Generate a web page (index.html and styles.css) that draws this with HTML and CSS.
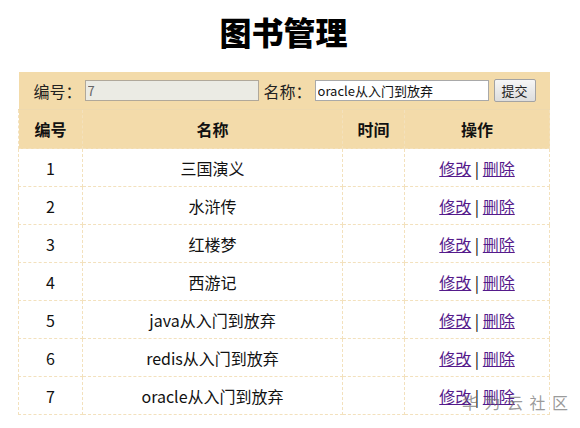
FILE: index.html
```html
<!DOCTYPE html>
<html lang="zh-CN">
<head>
<meta charset="utf-8">
<link rel="stylesheet" href="styles.css">
</head>
<body>
<div class="page">
  <h1 class="title">图书管理</h1>
  <table class="books">
    <colgroup>
      <col class="c-id">
      <col class="c-name">
      <col class="c-time">
      <col class="c-op">
    </colgroup>
    <tr class="form-row">
      <td colspan="4">
        <form class="book-form">
          <label class="lbl">编号：</label>
          <input class="field field-id" type="text" value="7" readonly>
          <label class="lbl lbl-name">名称：</label>
          <input class="field field-name" type="text" value="oracle从入门到放弃">
          <button class="submit" type="button">提交</button>
        </form>
      </td>
    </tr>
    <tr class="head-row">
      <th>编号</th>
      <th>名称</th>
      <th>时间</th>
      <th>操作</th>
    </tr>
    <tr><td>1</td><td>三国演义</td><td></td><td><a href="#">修改</a> | <a href="#">删除</a></td></tr>
    <tr><td>2</td><td>水浒传</td><td></td><td><a href="#">修改</a> | <a href="#">删除</a></td></tr>
    <tr><td>3</td><td>红楼梦</td><td></td><td><a href="#">修改</a> | <a href="#">删除</a></td></tr>
    <tr><td>4</td><td>西游记</td><td></td><td><a href="#">修改</a> | <a href="#">删除</a></td></tr>
    <tr><td>5</td><td>java从入门到放弃</td><td></td><td><a href="#">修改</a> | <a href="#">删除</a></td></tr>
    <tr><td>6</td><td>redis从入门到放弃</td><td></td><td><a href="#">修改</a> | <a href="#">删除</a></td></tr>
    <tr><td>7</td><td>oracle从入门到放弃</td><td></td><td><a href="#">修改</a> | <a href="#">删除</a></td></tr>
  </table>
</div>
<div class="watermark">华为云社区</div>
</body>
</html>
```

FILE: styles.css
```css
html, body {
  margin: 0;
  padding: 0;
  background: #ffffff;
}
body {
  font-family: "Noto Sans CJK SC", "Noto Sans", sans-serif;
  color: #111;
  font-size: 16px;
}
.page {
  width: 531px;
  margin-left: 18px;
}
.title {
  margin: 11px 0 21px;
  font-size: 32px;
  line-height: 40px;
  font-weight: 900;
  text-align: center;
  color: #000;
}
.books {
  width: 531px;
  border-collapse: collapse;
  table-layout: fixed;
}
.c-id { width: 64px; }
.c-name { width: 260px; }
.c-time { width: 62px; }
.c-op { width: 145px; }
.books td, .books th {
  border: 1px dashed #f3e1bd;
  text-align: center;
  height: 37px;
  padding: 0;
  font-size: 16px;
  line-height: 20px;
  white-space: nowrap;
}
.form-row td {
  background: #f3dbaa;
  border: none;
  border-bottom: 1px solid #eed9ae;
  text-align: left;
  height: 37px;
}
.book-form {
  display: flex;
  align-items: center;
  padding-left: 15px;
  margin: 0;
  color: #222;
}
.lbl {
  font-size: 16px;
  margin-right: 3px;
}
.lbl-name {
  margin-left: 5px;
}
.field {
  box-sizing: border-box;
  height: 21px;
  border: 1px solid #a9a9a9;
  padding: 0 2px;
  font-family: "Noto Sans CJK SC", sans-serif;
  font-size: 13px;
  outline: none;
}
.field-id {
  width: 174px;
  background: #ebebe4;
  color: #666;
  border-color: #b0a89a;
}
.field-name {
  width: 174px;
  background: #fff;
  color: #111;
  border-color: #a9a9a9;
}
.submit {
  margin-left: 5px;
  height: 23px;
  width: 42px;
  padding: 0;
  font-family: "Noto Sans CJK SC", sans-serif;
  font-size: 13px;
  color: #222;
  background: linear-gradient(#f6f6f6, #dddddd);
  border: 1px solid #a3a3a3;
  border-radius: 2px;
}
.head-row th {
  background: #f3dbaa;
  font-weight: 700;
  height: 38px;
  border-top: none;
}
.books a {
  color: #551a8b;
  text-decoration: underline;
}
.watermark {
  position: absolute;
  left: 462px;
  top: 390px;
  white-space: nowrap;
  font-family: "Noto Sans CJK SC", sans-serif;
  font-size: 16px;
  letter-spacing: 6.5px;
  color: rgba(110, 110, 110, 0.7);
}
```
